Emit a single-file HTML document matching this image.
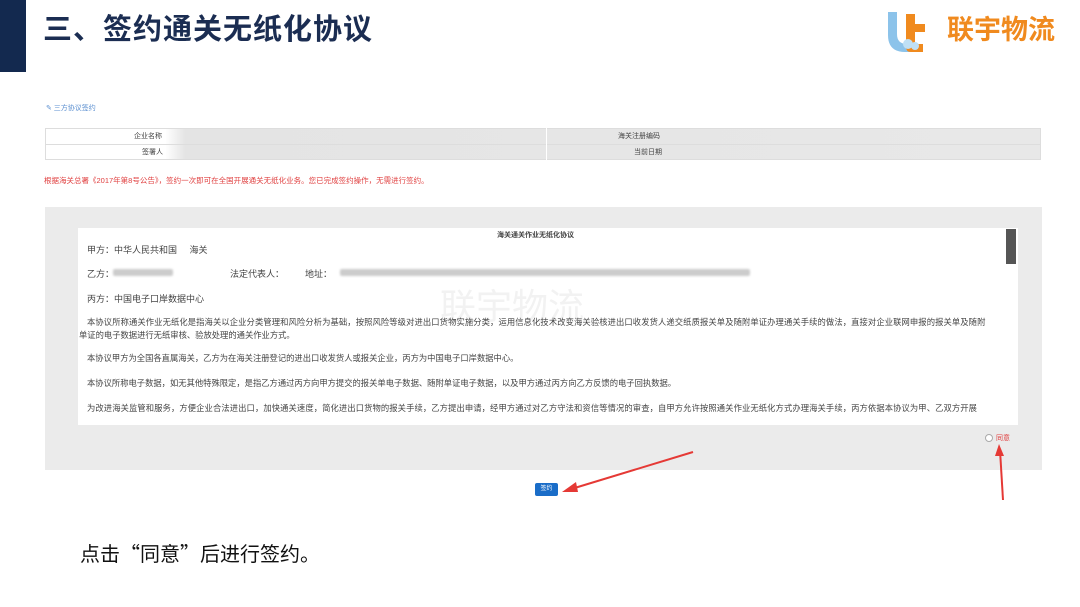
<!DOCTYPE html>
<html><head><meta charset="utf-8"><style>
*{margin:0;padding:0;box-sizing:border-box}
body{width:1080px;height:607px;background:#fff;position:relative;overflow:hidden;font-family:"Liberation Sans","Noto Sans CJK SC",sans-serif}
.a{position:absolute}
.t{font-size:9px;color:#444;white-space:nowrap}
.blur{background:#ccc;height:7px;border-radius:2px;filter:blur(1px)}
</style></head><body>
<div class="a" style="left:0;top:0;width:26px;height:72px;background:#13294f"></div>
<div class="a" style="left:43px;top:6px;font-size:29px;font-weight:bold;color:#1b2d52;letter-spacing:1px">三、签约通关无纸化协议</div>
<svg class="a" style="left:884px;top:8px" width="64" height="46" viewBox="0 0 64 46">
<path d="M4 4 h9 v22 q0 10 10 10 h4 v8 h-6 q-17 0 -17 -17z" fill="#8cc3ea"/>
<path d="M22 6 h9 v10 h10 v8 h-10 v12 h8 v8 h-12 q-5 0 -5 -5z" fill="#f08a1e"/>
<circle cx="24" cy="36" r="5" fill="#bfe0f5"/><circle cx="31" cy="38" r="4" fill="#bfe0f5"/>
</svg>
<div class="a" style="left:947px;top:8px;font-size:27px;font-weight:bold;color:#f08a1e">联宇物流</div>

<div class="a" style="left:46px;top:103px;font-size:7px;color:#5b8fd0">✎ 三方协议签约</div>
<div class="a" style="left:45px;top:128px;width:996px;height:32px;border:1px solid #ddd;background:linear-gradient(90deg,#fff 0,#fff 12%,#e4e4e4 14%,#e8e8e8 100%)"></div>
<div class="a" style="left:45px;top:144px;width:996px;height:1px;background:#ddd"></div>
<div class="a" style="left:546px;top:128px;width:1px;height:32px;background:#fff"></div>
<div class="a t" style="left:134px;top:131px;font-size:7px">企业名称</div>
<div class="a t" style="left:142px;top:147px;font-size:7px">签署人</div>
<div class="a t" style="left:618px;top:131px;font-size:7px">海关注册编码</div>
<div class="a t" style="left:634px;top:147px;font-size:7px">当前日期</div>
<div class="a" style="left:44px;top:175px;font-size:7.5px;color:#e04040;white-space:nowrap">根据海关总署《2017年第8号公告》，签约一次即可在全国开展通关无纸化业务。您已完成签约操作，无需进行签约。</div>

<div class="a" style="left:45px;top:207px;width:997px;height:263px;background:#ebebeb"></div>
<div class="a" style="left:78px;top:228px;width:940px;height:197px;background:#fff"></div>
<div class="a" style="left:1006px;top:229px;width:10px;height:35px;background:#555"></div>
<div class="a t" style="left:497px;top:230px;font-size:7px;font-weight:bold">海关通关作业无纸化协议</div>
<div class="a t" style="left:87px;top:243px">甲方：中华人民共和国 &nbsp;&nbsp;&nbsp;&nbsp;海关</div>
<div class="a t" style="left:87px;top:267px">乙方：</div>
<div class="a t" style="left:230px;top:267px">法定代表人：</div>
<div class="a t" style="left:305px;top:267px">地址：</div>
<div class="a blur" style="left:113px;top:269px;width:60px"></div>
<div class="a blur" style="left:340px;top:269px;width:410px"></div>
<div class="a t" style="left:87px;top:292px">丙方：中国电子口岸数据中心</div>
<div class="a" style="left:440px;top:278px;font-size:36px;color:#f2f2f2">联宇物流</div>
<div class="a t" style="left:87px;top:316px;font-size:8.3px;letter-spacing:0.1px">本协议所称通关作业无纸化是指海关以企业分类管理和风险分析为基础，按照风险等级对进出口货物实施分类，运用信息化技术改变海关验核进出口收发货人递交纸质报关单及随附单证办理通关手续的做法，直接对企业联网申报的报关单及随附</div>
<div class="a t" style="left:79px;top:329px;font-size:8.3px">单证的电子数据进行无纸审核、验放处理的通关作业方式。</div>
<div class="a t" style="left:87px;top:352px;font-size:8.3px">本协议甲方为全国各直属海关，乙方为在海关注册登记的进出口收发货人或报关企业，丙方为中国电子口岸数据中心。</div>
<div class="a t" style="left:87px;top:377px;font-size:8.3px">本协议所称电子数据，如无其他特殊限定，是指乙方通过丙方向甲方提交的报关单电子数据、随附单证电子数据，以及甲方通过丙方向乙方反馈的电子回执数据。</div>
<div class="a t" style="left:87px;top:402px;font-size:8.3px;letter-spacing:0.1px">为改进海关监管和服务，方便企业合法进出口，加快通关速度，简化进出口货物的报关手续，乙方提出申请，经甲方通过对乙方守法和资信等情况的审查，自甲方允许按照通关作业无纸化方式办理海关手续，丙方依据本协议为甲、乙双方开展</div>
<div class="a" style="left:985px;top:434px;width:8px;height:8px;border:1px solid #aaa;border-radius:50%;background:#fff"></div>
<div class="a" style="left:996px;top:433px;font-size:7px;color:#e04040">同意</div>
<div class="a" style="left:535px;top:483px;width:23px;height:13px;background:#1a6dc8;border-radius:2px;color:#fff;font-size:6px;text-align:center;line-height:13px">签约</div>
<svg class="a" style="left:0;top:0" width="1080" height="607">
<line x1="693" y1="452" x2="568" y2="490" stroke="#e53935" stroke-width="2"/>
<polygon points="562,492 576,482 578,492" fill="#e53935"/>
<line x1="1000" y1="450" x2="1003" y2="500" stroke="#e53935" stroke-width="2"/>
<polygon points="999,444 995,456 1004,456" fill="#e53935"/>
</svg>
<div class="a" style="left:80px;top:538px;font-size:20px;color:#111;font-family:'Noto Sans CJK SC',sans-serif">点击“同意”后进行签约。</div>
</body></html>
